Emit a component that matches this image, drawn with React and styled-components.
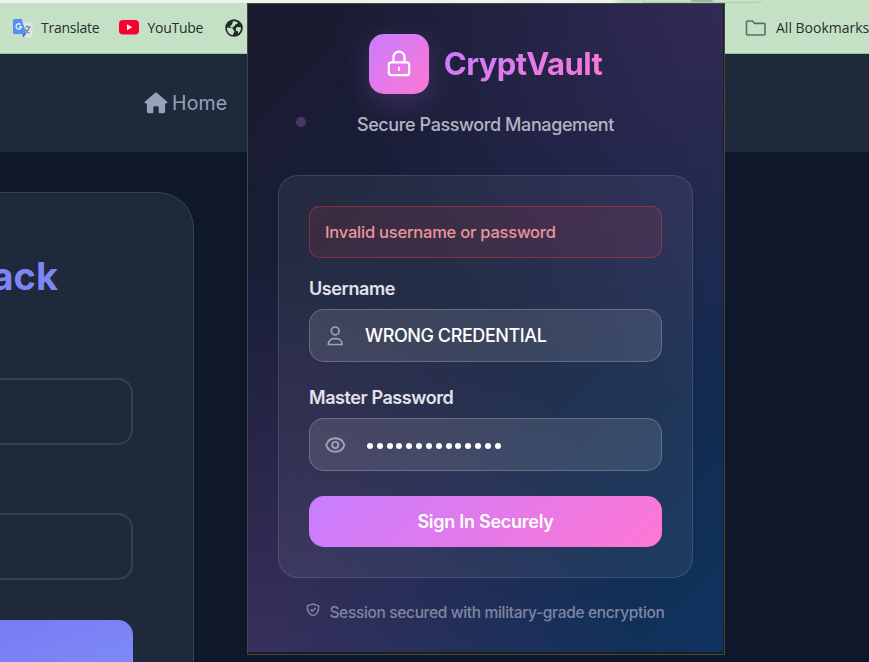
import React from "react";
import styled, { createGlobalStyle } from "styled-components";

const Global = createGlobalStyle`
  *, *::before, *::after { box-sizing: border-box; }
  body { margin: 0; background: #0f172a; font-family: "Inter", sans-serif; }
  button, input { font: inherit; }
`;

const Screen = styled.main`
  position: relative;
  width: 869px;
  height: 662px;
  overflow: hidden;
  background: #0f172a;
`;

/* ---------- Browser chrome ---------- */
const TabStrip = styled.div`
  display: flex;
  justify-content: flex-end;
  height: 3px;
  background: linear-gradient(90deg, #edf6ed 0 612px, #c5e1c5 622px);
  padding-right: 108px;
  overflow: hidden;
`;
const ToolbarPill = styled.div`
  display: flex;
  justify-content: center;
  align-items: flex-end;
  width: 118px;
  height: 3px;
  border: 1px solid #b0ccb1;
  border-top: 0;
  border-radius: 0 0 16px 16px;
  &::after { content: ""; width: 22px; height: 2px; background: #9db59f; border-radius: 0 0 12px 12px; }
`;
const BookmarksBar = styled.nav`
  display: flex;
  align-items: center;
  justify-content: space-between;
  height: 51px;
  padding: 0 0 1px 12px;
  background: #c5e1c5;
  border-bottom: 1px solid #a5bda9;
  color: #23302a;
  font-family: "Open Sans", sans-serif;
  font-size: 14px;
  white-space: nowrap;
`;
const BookmarkGroup = styled.div`
  display: flex;
  align-items: center;
  gap: 20px;
`;
const Bookmark = styled.span`
  display: flex;
  align-items: center;
  gap: ${(p) => p.$gap || 8}px;
  padding-left: ${(p) => p.$inset || 0}px;
  letter-spacing: -0.25px;
  svg { flex: none; }
`;
const AllBookmarks = styled(Bookmark)`
  width: 124px;
  letter-spacing: 0;
`;

/* ---------- Page behind the popup ---------- */
const SiteHeader = styled.header`
  display: flex;
  align-items: center;
  height: 98px;
  padding-left: 144px;
  background: #1e293b;
`;
const HomeLink = styled.a`
  display: flex;
  align-items: center;
  gap: 4px;
  color: #94a3b8;
  font-size: 19.5px;
  letter-spacing: 0.15px;
`;
const SitePanel = styled.section`
  width: 194px;
  height: 500px;
  margin-top: 40px;
  padding: 60px 60px 0 0;
  background: #1e293b;
  border: 1px solid #334155;
  border-left: 0;
  border-radius: 0 36px 0 0;
`;
const SiteTitle = styled.h1`
  display: flex;
  justify-content: flex-end;
  width: 58px;
  margin: -1px 0 78px;
  color: #7c86f5;
  font-size: 38px;
  line-height: 48px;
  font-weight: 700;
`;
const SiteField = styled.div`
  height: 67px;
  margin-bottom: ${(p) => p.$after}px;
  border: 2px solid #334155;
  border-left: 0;
  border-radius: 0 15px 15px 0;
`;
const SiteButton = styled.div`
  height: 67px;
  border-radius: 0 15px 0 0;
  background: linear-gradient(160deg, #767cf3, #818cf8);
`;

/* ---------- Extension popup ---------- */
const Popup = styled.section`
  position: absolute;
  left: 247px;
  top: 3px;
  width: 478px;
  height: 652px;
  padding: 0 1px 2px 0;
  background: #1c1e20;
  border: 1px solid #47463f;
`;
const PopupBody = styled.div`
  position: relative;
  display: flex;
  flex-direction: column;
  align-items: center;
  width: 475px;
  height: 648px;
  padding: 30px 30px 0;
  background:
    radial-gradient(circle at 0% 100%, rgba(180, 92, 188, 0.22), transparent 49%),
    radial-gradient(circle at 100% 0%, rgba(155, 83, 196, 0.2), transparent 49%),
    linear-gradient(135deg, #1a1a2e 0%, #16213e 50%, #0f3460 100%);
`;
const Particle = styled.i`
  position: absolute;
  left: 48px;
  top: 113px;
  width: 10px;
  height: 10px;
  border-radius: 50%;
  background: #493669;
`;
const Brand = styled.div`
  display: flex;
  align-items: center;
  gap: 15px;
`;
const BrandMark = styled.div`
  display: grid;
  place-items: center;
  width: 60px;
  height: 60px;
  border-radius: 15px;
  background: linear-gradient(135deg, #c77dff, #ff77d4);
  box-shadow: 0 8px 30px rgba(199, 119, 255, 0.2);
`;
const BrandName = styled.h2`
  margin: 0;
  font-size: 31px;
  line-height: 40px;
  font-weight: 700;
  letter-spacing: -0.6px;
  background: linear-gradient(135deg, #c77dff, #ff77d4);
  background-clip: text;
  color: transparent;
`;
const Tagline = styled.p`
  margin: 20px 0 39px;
  color: #b3b4c3;
  font-size: 18px;
  font-weight: 500;
  line-height: 22px;
  letter-spacing: -0.4px;
`;
const LoginCard = styled.form`
  display: flex;
  flex-direction: column;
  width: 415px;
  height: 403px;
  padding: 30px;
  border: 1px solid rgba(255, 255, 255, 0.11);
  border-radius: 20px;
  background: rgba(255, 255, 255, 0.06);
`;
const ErrorMessage = styled.div`
  display: flex;
  align-items: center;
  height: 52px;
  padding: 0 15px;
  border: 1px solid rgba(220, 60, 75, 0.45);
  border-radius: 10px;
  background: rgba(220, 53, 69, 0.13);
  color: #ea949e;
  font-size: 16.5px;
  font-weight: 500;
  letter-spacing: -0.22px;
`;
const Label = styled.label`
  margin-top: ${(p) => p.$top}px;
  color: #e2e2ea;
  font-size: 18px;
  line-height: 22px;
  font-weight: 600;
  letter-spacing: -0.42px;
`;
const InputBox = styled.div`
  display: flex;
  align-items: center;
  gap: 19px;
  height: 53px;
  margin-top: 9px;
  padding: 0 15px;
  border: 1px solid rgba(255, 255, 255, 0.21);
  border-radius: 15px;
  background: rgba(255, 255, 255, 0.11);
  color: #a0a3b4;
  svg { flex: none; }
`;
const TextValue = styled.span`
  color: #fff;
  font-size: 18px;
  font-weight: 500;
  letter-spacing: -0.42px;
`;
const Dots = styled.span`
  display: flex;
  gap: 3.84px;
  margin: 2px 0 0 2px;
`;
const Dot = styled.i`
  width: 6px;
  height: 6px;
  border-radius: 50%;
  background: #fff;
`;
const SubmitButton = styled.button`
  height: 51px;
  margin-top: 25px;
  padding: 0;
  border: 0;
  border-radius: 15px;
  background: linear-gradient(135deg, #c77dff, #ff77d4);
  color: #fff;
  font-size: 18px;
  font-weight: 600;
  letter-spacing: -0.27px;
`;
const SecurityNote = styled.footer`
  display: flex;
  gap: 9px;
  margin-top: 24px;
  color: #8085a2;
  font-size: 15.5px;
  font-weight: 500;
  letter-spacing: -0.34px;
  line-height: 22px;
  white-space: nowrap;
  svg { flex: none; margin-top: 1px; }
`;

/* ---------- Icons ---------- */
const TranslateIcon = () => (
  <svg width="21" height="20" viewBox="0 0 21 20">
    <path d="M9 4h10.500a1 1 0 0 1 1 1v13.500a1 1 0 0 1-1 1H13z" fill="#dfe3e1" />
    <path d="M11 19.500 10.500 15.500h4z" fill="#3867cf" />
    <path d="M2.500 1h7l5 15H2.500A1.500 1.500 0 0 1 1 14.500v-12A1.500 1.500 0 0 1 2.500 1z" fill="#5490f0" />
    <path d="M8.800 6.700A2.700 2.700 0 1 0 9.400 9H7" fill="none" stroke="#e6f0ff" strokeWidth="1.300" />
    <path d="M13 9h6M15.500 7.500V9m2 0c-.6 2.600-2 4.500-4 5.700m-.4-3.800c1 2 2.500 3.400 4.400 4.200" fill="none" stroke="#6f8792" strokeWidth="1.200" />
  </svg>
);
const YouTubeIcon = () => (
  <svg width="20" height="15" viewBox="0 0 20 15">
    <rect width="20" height="14.500" rx="3.800" fill="#f8002f" />
    <path d="m8 4.300 5.200 3L8 10.300z" fill="#fff" />
  </svg>
);
const GlobeIcon = () => (
  <svg width="18" height="18" viewBox="0 0 18 18">
    <circle cx="9" cy="9" r="8.800" fill="#232b27" />
    <path d="M2 8.500 6.200 9c1.600.2 2.100 1 2.100 2.500h1v1.500L7.600 16C4.500 15.600 2 12.700 2 9z" fill="#c5e1c5" />
    <path d="M8 2.200c1.800-.2 3.400.2 4.700 1.100L12.200 5 10 5.400v1.400l-1.700.6v1.200H5.800L5 7.200l2-1.700z" fill="#c5e1c5" />
    <path d="m11 9 1.600-1 3.300.2c.3 2.500-.8 4.800-2.700 6.300L12.800 12H11z" fill="#c5e1c5" />
  </svg>
);
const FolderIcon = () => (
  <svg width="21" height="16" viewBox="0 0 21 16" fill="none" stroke="#5c6e61" strokeWidth="1.600">
    <path d="M1.500 2a1 1 0 0 1 1-1h5l2 2.400h9.500a1 1 0 0 1 1 1V14a1 1 0 0 1-1 1H2.500a1 1 0 0 1-1-1z" />
  </svg>
);
const HomeIcon = () => (
  <svg width="24" height="22" viewBox="0 0 24 22" fill="#94a3b8">
    <path d="M11.100.7a1.400 1.400 0 0 1 1.800 0l10 8.700c.9.800.4 2.100-.8 2.100h-1v8c0 1-.8 1.800-1.800 1.800h-3.600c-.6 0-1-.4-1-1v-4.500c0-.9-.7-1.500-1.500-1.500h-2.400c-.8 0-1.500.6-1.500 1.500v4.500c0 .6-.4 1-1 1H4.700c-1 0-1.800-.8-1.800-1.800v-8h-1C.7 11.500.2 10.200 1.100 9.400z" />
  </svg>
);
const LockIcon = () => (
  <svg width="24" height="28" viewBox="0 0 24 28" fill="none" stroke="#fff" strokeWidth="2.200" strokeLinecap="round">
    <rect x="1.800" y="12.300" width="20.400" height="12.800" rx="2.500" />
    <path d="M6.500 12.300V7.200a5.500 5.500 0 0 1 11 0v5.100M12 17.600v2.500" />
  </svg>
);
const UserIcon = () => (
  <svg width="21" height="22" viewBox="0 0 21 22" fill="none" stroke="currentColor" strokeWidth="1.700" strokeLinejoin="round">
    <circle cx="10.200" cy="5.900" r="3.900" />
    <path d="M3.300 19.500c0-3.300 2.500-5.800 5.800-5.800h2.200c3.300 0 5.800 2.500 5.800 5.800z" />
  </svg>
);
const EyeIcon = () => (
  <svg width="21" height="18" viewBox="0 0 21 18" fill="none" stroke="currentColor" strokeWidth="1.900">
    <path d="M1.200 9C2.600 4.700 6 2.200 10.300 2.200S18 4.700 19.400 9c-1.400 4.300-4.800 6.800-9.100 6.800S2.600 13.300 1.200 9z" />
    <circle cx="10.300" cy="9" r="3.100" />
  </svg>
);
const ShieldIcon = () => (
  <svg width="14" height="14" viewBox="0 0 14 14" fill="none" stroke="currentColor" strokeWidth="1.400" strokeLinejoin="round" strokeLinecap="round">
    <path d="M7 1 12.700 2.800c.3 5-1.100 8.300-5.700 9.900C2.400 11.100 1 7.800 1.300 2.800z" />
    <path d="m4.800 6.800 1.500 1.500 3-3" />
  </svg>
);

export default function App() {
  return (
    <Screen>
      <Global />
      <TabStrip><ToolbarPill /></TabStrip>
      <BookmarksBar>
        <BookmarkGroup>
          <Bookmark><TranslateIcon />Translate</Bookmark>
          <Bookmark><YouTubeIcon />YouTube</Bookmark>
          <Bookmark $inset={2}><GlobeIcon /></Bookmark>
        </BookmarkGroup>
        <AllBookmarks $gap={10}><FolderIcon />All Bookmarks</AllBookmarks>
      </BookmarksBar>
      <SiteHeader>
        <HomeLink><HomeIcon />Home</HomeLink>
      </SiteHeader>
      <SitePanel>
        <SiteTitle>ack</SiteTitle>
        <SiteField $after={68} />
        <SiteField $after={40} />
        <SiteButton />
      </SitePanel>
      <Popup>
        <PopupBody>
          <Particle />
          <Brand>
            <BrandMark><LockIcon /></BrandMark>
            <BrandName>CryptVault</BrandName>
          </Brand>
          <Tagline>Secure Password Management</Tagline>
          <LoginCard>
            <ErrorMessage>Invalid username or password</ErrorMessage>
            <Label $top={20}>Username</Label>
            <InputBox><UserIcon /><TextValue>WRONG CREDENTIAL</TextValue></InputBox>
            <Label $top={25}>Master Password</Label>
            <InputBox>
              <EyeIcon />
              <Dots>{Array.from({ length: 14 }, (_, i) => <Dot key={i} />)}</Dots>
            </InputBox>
            <SubmitButton type="button">Sign In Securely</SubmitButton>
          </LoginCard>
          <SecurityNote><ShieldIcon />Session secured with military-grade encryption</SecurityNote>
        </PopupBody>
      </Popup>
    </Screen>
  );
}
